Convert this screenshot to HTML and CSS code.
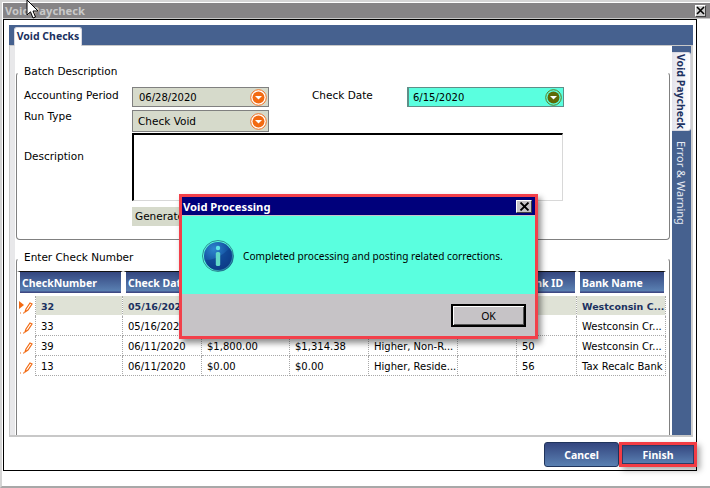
FILE: index.html
```html
<!DOCTYPE html>
<html lang="en">
<head>
<meta charset="utf-8">
<title>Void Paycheck</title>
<link rel="stylesheet" href="styles.css">
</head>
<body>
<div class="window">
  <header class="titlebar">
    <span class="title-text">Void Paycheck</span>
    <button class="close-btn" type="button" aria-label="Close"><svg width="9" height="9" viewBox="0 0 9 9"><path d="M1 1l7 7M8 1L1 8" stroke="#000" stroke-width="1.6"/></svg></button>
  </header>
  <div class="frame">
    <nav class="tabstrip"><span class="tab">Void Checks</span></nav>
    <div class="pane">
      <main class="content">
        <fieldset class="group group-batch">
          <legend>Batch Description</legend>
          <div class="form">
            <label class="lbl lbl-acc">Accounting Period</label>
            <div class="field date-field"><span>06/28/2020</span><svg class="drop" width="17" height="17" viewBox="0 0 17 17"><circle cx="8.5" cy="8.5" r="7.8" fill="#fff" stroke="#f07020"/><circle cx="8.5" cy="8.5" r="6" fill="#f26a12"/><path d="M5 7h7l-3.500 3.500z" fill="#fff"/></svg></div>
            <label class="lbl lbl-date">Check Date</label>
            <div class="field teal-field"><span>6/15/2020</span><svg class="drop" width="17" height="17" viewBox="0 0 17 17"><circle cx="8.500" cy="8.500" r="7.800" fill="#5affdf" stroke="#5e7a20"/><circle cx="8.500" cy="8.500" r="6" fill="#5f6a06"/><path d="M5 7h7l-3.500 3.500z" fill="#fff"/></svg></div>
            <label class="lbl lbl-run">Run Type</label>
            <div class="field run-field"><span>Check Void</span><svg class="drop" width="17" height="17" viewBox="0 0 17 17"><circle cx="8.500" cy="8.500" r="7.800" fill="#fff" stroke="#f07020"/><circle cx="8.500" cy="8.500" r="6" fill="#f26a12"/><path d="M5 7h7l-3.500 3.500z" fill="#fff"/></svg></div>
            <label class="lbl lbl-desc">Description</label>
            <div class="textarea"></div>
            <div class="generate">Generate</div>
          </div>
        </fieldset>
        <fieldset class="group group-checks">
          <legend>Enter Check Number</legend>
          <table class="grid">
            <colgroup>
              <col class="c0"><col class="c1"><col class="c2"><col class="c3"><col class="c4"><col class="c5"><col class="c6"><col class="c7"><col class="c8">
            </colgroup>
            <thead>
              <tr>
                <th colspan="2">CheckNumber</th><th>Check Date</th><th>Gross</th><th>Net</th><th>Type</th><th></th><th>Bank ID</th><th>Bank Name</th>
              </tr>
            </thead>
            <tbody>
              <tr class="selected">
                <td class="mark"><svg width="18" height="14" viewBox="0 0 18 14"><path d="M2 1l5 4-5 4z" fill="#f26a12"/><path class="pencil" d="M8 12l1-3 4-6 2 1-4 6zM3 13h1M6 13h1"/></svg></td>
                <td class="first">32</td><td>05/16/2020</td><td></td><td></td><td></td><td></td><td></td><td>Westconsin C...</td>
              </tr>
              <tr>
                <td class="mark"><svg width="18" height="14" viewBox="0 0 18 14"><path class="pencil" d="M8 12l1-3 4-6 2 1-4 6zM3 13h1M6 13h1"/></svg></td>
                <td class="first">33</td><td>05/16/2020</td><td></td><td></td><td></td><td></td><td></td><td>Westconsin Cr...</td>
              </tr>
              <tr>
                <td class="mark"><svg width="18" height="14" viewBox="0 0 18 14"><path class="pencil" d="M8 12l1-3 4-6 2 1-4 6zM3 13h1M6 13h1"/></svg></td>
                <td class="first">39</td><td>06/11/2020</td><td>$1,800.00</td><td>$1,314.38</td><td>Higher, Non-R...</td><td></td><td>50</td><td>Westconsin Cr...</td>
              </tr>
              <tr>
                <td class="mark"><svg width="18" height="14" viewBox="0 0 18 14"><path class="pencil" d="M8 12l1-3 4-6 2 1-4 6zM3 13h1M6 13h1"/></svg></td>
                <td class="first">13</td><td>06/11/2020</td><td>$0.00</td><td>$0.00</td><td>Higher, Reside...</td><td></td><td>56</td><td>Tax Recalc Bank</td>
              </tr>
            </tbody>
          </table>
        </fieldset>
      </main>
      <aside class="sidetabs">
        <span class="sidetab active">Void Paycheck</span>
        <span class="sidetab">Error &amp; Warning</span>
      </aside>
    </div>
    <footer class="actions">
      <button class="btn" type="button">Cancel</button>
      <button class="btn btn-finish" type="button">Finish</button>
    </footer>
  </div>
</div>

<section class="dialog" role="dialog">
  <header class="dialog-title">
    <span>Void Processing</span>
    <button class="dialog-close" type="button" aria-label="Close"><svg width="11" height="9" viewBox="0 0 11 9"><path d="M1.500 .5l8 8M9.500 .5l-8 8" stroke="#000" stroke-width="1.800"/></svg></button>
  </header>
  <div class="dialog-body">
    <svg class="info" width="32" height="32" viewBox="0 0 32 32">
      <defs>
        <radialGradient id="orb" cx="35%" cy="25%" r="85%"><stop offset="0" stop-color="#2f86cf"/><stop offset=".6" stop-color="#12509f"/><stop offset="1" stop-color="#0b2f78"/></radialGradient>
      </defs>
      <circle cx="16" cy="16" r="15.500" fill="none" stroke="#2f8f94"/>
      <circle cx="16" cy="16" r="14" fill="url(#orb)"/>
      <path d="M4 20Q16 20 28 8A14 14 0 0 1 8 27.500Q5 24 4 20z" fill="#0d3f8c" opacity=".6"/>
      <circle cx="16" cy="8" r="2.200" fill="#5fe6e6"/>
      <rect x="13.800" y="12" width="4.400" height="14" rx="1.500" fill="#62d8c8"/>
    </svg>
    <p>Completed processing and posting related corrections.</p>
  </div>
  <div class="dialog-foot"><button class="ok" type="button">OK</button></div>
</section>

<svg class="cursor" width="13" height="20" viewBox="0 0 13 20"><path d="M1 0v15l3.500-3.200L7 18l2.500-1-2.500-6h5z" fill="#fff" stroke="#000" stroke-width="1"/></svg>
</body>
</html>
```
FILE: styles.css
```css
* { box-sizing: border-box; }
html, body { margin: 0; padding: 0; }
body {
  width: 710px;
  height: 488px;
  position: relative;
  overflow: hidden;
  background: #fff;
  font-family: "DejaVu Sans", Verdana, sans-serif;
  font-size: 10.5px;
  color: #000;
}
button { font-family: inherit; padding: 0; cursor: default; }

.window {
  height: 488px;
  border-top: 2px solid #d4d4d4;
  border-left: 2px solid #d4d4d4;
  border-bottom: 2px solid #a8a8a8;
  padding-top: 1px;
}
.titlebar {
  height: 16px;
  margin-left: 1px;
  background: #868486;
  border-bottom: 1px solid #c8c8c8;
  display: flex;
  align-items: center;
  justify-content: space-between;
  padding: 0 4px 0 2px;
}
.title-text { font-family: "Noto Sans", sans-serif; font-weight: bold; font-size: 11.2px; color: #c9c9c9; }
.close-btn {
  width: 11px;
  height: 12px;
  background: #d0d0d0;
  border: 1px solid;
  border-color: #fff #404040 #404040 #fff;
  display: flex;
  align-items: center;
  justify-content: center;
}

.frame {
  margin-left: 1px;
  width: 694px;
  height: 452px;
  border: 1px solid #000;
  padding: 5px 3px 0 5px;
  display: flex;
  flex-direction: column;
}
.tabstrip {
  height: 21px;
  flex: none;
  background: #46618f;
  border-bottom: 1px solid #c8c8c8;
  padding: 2px 0 0 5px;
  display: flex;
}
.tab {
  width: 68px;
  height: 19px;
  background: #fff;
  border: 1px solid #d8d8e0;
  border-bottom: 0;
  border-radius: 3px 3px 0 0;
  color: #1c3160;
  font-family: "Noto Sans", sans-serif;
  font-weight: bold;
  font-size: 10.5px;
  text-align: center;
  line-height: 17px;
  white-space: nowrap;
}
.pane {
  height: 391px;
  flex: none;
  display: flex;
  border-bottom: 2px solid #c8c8c8;
  border-left: 1px solid #c8c8c8;
}
.content {
  flex: 1;
  min-width: 0;
  padding: 18px 2px 0 6px;
  background: linear-gradient(to right, #e8e8ea 5px, #fff 5px);
  display: flex;
  flex-direction: column;
  gap: 10px;
}
.group {
  margin: 0;
  padding: 0;
  min-width: 0;
  background: #fff;
  border: 1px solid #808080;
  border-top-color: transparent;
  border-radius: 4px;
}
.group legend { margin-left: 6px; padding: 0 1px 2px; line-height: 14px; }
.group-batch { height: 176px; }
.group-checks { flex: 1; border-bottom: 0; border-radius: 4px 4px 0 0; }

.form {
  padding: 7px 0 0 7px;
  display: grid;
  grid-template-columns: 108px 137px 43px 95px 157px;
  grid-template-rows: 20px 22px 68px 20px;
  row-gap: 3px;
}
.lbl { padding-top: 2px; }
.lbl-run { padding-top: 0; grid-row: 2; grid-column: 1; }
.lbl-desc { padding-top: 15px; grid-row: 3; grid-column: 1; }
.lbl-date { grid-column: 4; }
.field {
  display: flex;
  align-items: center;
  justify-content: space-between;
  padding: 0 1px 0 6px;
  border: 1px solid #808080;
  background: #d6dacb;
  font-size: 10px;
}
.date-field { grid-column: 2; }
.teal-field { grid-column: 5; background: #5affdf; border-left-width: 2px; border-color: #5f8f88; padding-left: 4px; }
.run-field { grid-row: 2; grid-column: 2; padding-left: 5px; font-size: 10.5px; }
.textarea {
  grid-column: 2 / span 4;
  width: 431px;
  height: 68px;
  margin-top: -2px;
  background: #fff;
  border: 2px solid #000;
  border-right: 1px solid #d8d8d8;
  border-bottom: 1px solid #d8d8d8;
}
.generate {
  grid-row: 4;
  grid-column: 2;
  margin-top: 1px;
  width: 137px;
  background: #d6dacb;
  padding-left: 3px;
  line-height: 18px;
}

.grid {
  table-layout: fixed;
  width: 649px;
  margin: 5px 0 0 0;
  border-collapse: separate;
  border-spacing: 0;
  font-size: 10px;
}
.c0 { width: 19px; } .c1 { width: 87px; } .c2 { width: 79px; } .c3 { width: 88px; } .c4 { width: 79px; }
.c5 { width: 89px; } .c6 { width: 59px; } .c7 { width: 60px; } .c8 { width: 89px; }
.grid th {
  height: 25px;
  padding: 0 0 0 2px;
  border-left: 3px solid #fff;
  border-right: 2px solid #fff;
  border-bottom: 3px solid #fff;
  border-top: 1px solid #111;
  background: linear-gradient(#34467f, #5a80b2 90%, #3f4a84 95%);
  background-clip: padding-box;
  color: #fff;
  font-family: "Noto Sans", sans-serif;
  font-weight: bold;
  font-size: 10.5px;
  text-align: left;
  white-space: nowrap;
  overflow: hidden;
}
.grid td {
  height: 20px;
  padding: 2px 0 0 5px;
  border-bottom: 1px dotted #a8a8a8;
  border-right: 1px dotted #a8a8a8;
  white-space: nowrap;
  overflow: hidden;
}
.grid td.mark { padding: 1px 0 0 0; border-bottom: 0; border-right: 1px dotted #a8a8a8; }
.mark svg { display: block; }
.pencil { fill: none; stroke: #f26a12; stroke-width: 1.200; }
.selected td { background: #dfe2d6; background-clip: padding-box; color: #1c3160; font-weight: bold; font-size: 9.5px; border-bottom-color: #fff; }
.selected td.mark { background: #fff; }

.sidetabs {
  width: 21px;
  flex: none;
  background: #46618f;
  border-right: 2px solid #d0d0d0;
  padding-top: 6px;
  display: flex;
  flex-direction: column;
  gap: 10px;
}
.sidetab {
  writing-mode: vertical-rl;
  white-space: nowrap;
  height: 84px;
  width: 19px;
  color: #e8ecf4;
  font-family: "Noto Sans", sans-serif;
  font-size: 11px;
  text-align: center;
  line-height: 19px;
}
.sidetab.active {
  height: 79px;
  background: linear-gradient(to right, #e4e4ec, #fff);
  border: 1px solid #d8d8e0;
  border-left: 0;
  border-radius: 0 3px 3px 0;
  color: #1c3160;
  font-weight: bold;
  font-size: 10.5px;
  line-height: 18px;
}

.actions {
  flex: 1;
  display: flex;
  justify-content: flex-end;
  align-items: flex-start;
  padding-top: 5px;
  margin-right: -4px;
}
.btn {
  width: 75px;
  height: 25px;
  border: 1px solid #20345c;
  border-radius: 3px;
  background: linear-gradient(#34467f, #5a80b2);
  color: #fff;
  font-family: "Noto Sans", sans-serif;
  font-weight: bold;
  font-size: 10.5px;
}
.btn-finish {
  width: 78px;
  border: 3px solid #f23c44;
  border-radius: 0;
  box-shadow: 3px 3px 6px rgba(0,0,0,.35), inset 0 0 0 1px #2a3c68;
}

.dialog {
  position: absolute;
  left: 179px;
  top: 194px;
  width: 359px;
  height: 145px;
  border: 3px solid #f2404a;
  background: #c6c3c6;
  box-shadow: 3px 4px 6px rgba(0,0,0,.45);
  display: flex;
  flex-direction: column;
}
.dialog-title {
  height: 18px;
  flex: none;
  background: #00007b;
  color: #fff;
  font-family: "Noto Sans", sans-serif;
  font-weight: bold;
  font-size: 11.2px;
  display: flex;
  align-items: center;
  justify-content: space-between;
  padding: 0 3px 0 1px;
}
.dialog-close {
  width: 16px;
  height: 13px;
  background: #c6c3c6;
  border: 1px solid;
  border-color: #fff #404040 #404040 #fff;
  display: flex;
  align-items: center;
  justify-content: center;
}
.dialog-body {
  height: 79px;
  flex: none;
  background: #5affdf;
  border-top: 1px solid #c6c3c6;
  display: flex;
  align-items: center;
  gap: 9px;
  padding: 2px 0 0 20px;
}
.dialog-body p { margin: 0; font-family: "Noto Sans", sans-serif; font-size: 10.1px; }
.dialog-foot {
  flex: 1;
  display: flex;
  justify-content: flex-end;
  align-items: flex-start;
  padding: 10px 9px 0 0;
}
.ok {
  width: 75px;
  height: 23px;
  background: #c6c3c6;
  border: 2px solid #000;
  box-shadow: inset 1px 1px 0 #fff, inset -1px -1px 0 #555;
  font-family: "Noto Sans", sans-serif;
  font-size: 10.5px;
}
.cursor { position: absolute; left: 26px; top: 0; }
```
